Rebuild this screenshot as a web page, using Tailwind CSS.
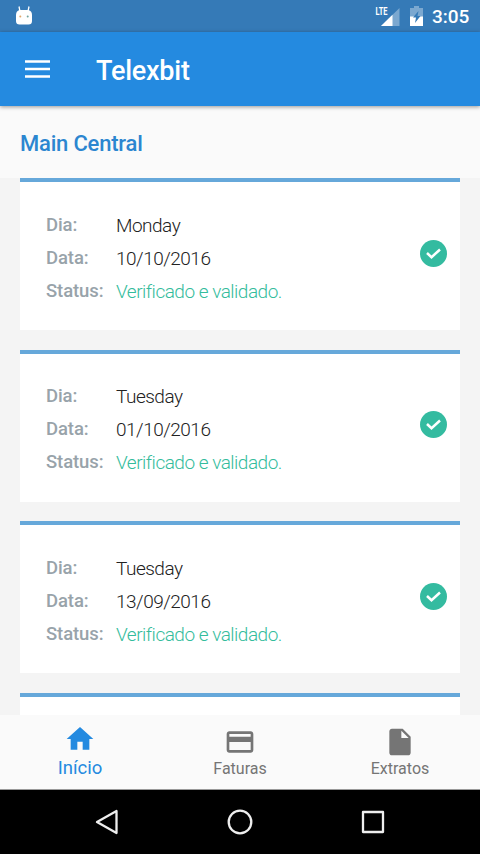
<!DOCTYPE html>
<html lang="pt">
<head>
<meta charset="utf-8">
<title>Telexbit</title>
<script src="https://cdn.jsdelivr.net/npm/@tailwindcss/browser@4"></script>
</head>
<body class="w-[480px] h-[854px] overflow-hidden flex flex-col bg-[#f4f4f4] font-['Roboto',sans-serif]">
<div class="h-8 shrink-0 bg-[#357ab7] flex items-center justify-between pl-4 pr-[10px] text-white">
  <svg class="w-4 h-[19px] -mt-0.5" viewBox="0 0 16 19"><path d="M3 0.5l1 5M13 0.5l-1 5" stroke="#fff" stroke-width="1.3"/><path d="M3.5 4h9Q16 5 16 9v6q0 3.5-3.5 3.5h-9Q0 18.500 0 15V9q0-4 3.500-5z" fill="#fff"/><circle cx="4.300" cy="10.500" r="1" fill="#e0a76c"/><circle cx="11.700" cy="10.500" r="1" fill="#6fa3a0"/></svg>
  <div class="flex items-center">
    <svg class="w-[26px] h-[22px]" viewBox="0 0 26 22"><path d="M24.500 3v18H6z" fill="#fff" opacity=".35"/><path d="M17.500 9.800V21H6z" fill="#fff"/><text x="0.500" y="9.500" font-family="Roboto" font-size="11.500" font-weight="700" fill="#fff" textLength="12" lengthAdjust="spacingAndGlyphs">LTE</text></svg>
    <svg class="w-[13px] h-[20px] ml-[9px]" viewBox="0 0 13 20"><path d="M4 0h5v2h4v18H0V2h4z" fill="#fff" opacity=".35"/><path d="M0 10.500h13V20H0z" fill="#fff"/><path d="M8.500 5L3 11.500h3L5 17l5.500-7H7.500z" fill="#357ab7"/></svg>
    <span class="ml-[9px] mt-px text-[19px] leading-8 font-medium w-[38px]">3:05</span>
  </div>
</div>
<header class="relative z-10 h-[74px] shrink-0 bg-[#248ae0] flex items-center pl-[25px] shadow-[0_1px_4px_rgba(0,0,0,0.4)]">
  <svg class="w-[25px] h-[18px]" viewBox="0 0 25 18"><path d="M0 1.500h25M0 9h25M0 16.500h25" stroke="#fff" stroke-width="2.700"/></svg>
  <span class="ml-[46px] mt-[3px] text-[27px] leading-8 font-medium tracking-[-0.25px] text-white">Telexbit</span>
</header>
<h1 class="h-[72px] shrink-0 bg-[#fafafa] pl-5 pt-[22px] text-[22px] leading-8 font-medium tracking-[-0.2px] text-[#2b86d0]">Main Central</h1>
<main class="h-[537px] shrink-0 overflow-hidden px-5 flex flex-col gap-[19.700px]" id="cards"></main>
<nav class="h-[75px] shrink-0 bg-[#fafafa] grid grid-cols-3 text-[#757575] text-[16px] border-b border-[#999]">
  <div class="flex flex-col items-center pt-2 text-[#248ae0]">
    <svg class="w-8 h-8" viewBox="0 0 24 24" fill="currentColor"><path d="M10 20v-6h4v6h5v-8h3L12 3 2 12h3v8z"/></svg>
    <span class="text-[18.500px] leading-[26px]">Início</span>
  </div>
  <div class="flex flex-col items-center pt-[11px]">
    <svg class="w-8 h-8" viewBox="0 0 24 24" fill="currentColor"><path d="M20 4H4c-1.110 0-1.990.890-1.990 2L2 18c0 1.110.890 2 2 2h16c1.110 0 2-.890 2-2V6c0-1.110-.890-2-2-2zm0 14H4v-6h16v6zm0-10H4V6h16v2z"/></svg>
    <span class="leading-[22px]">Faturas</span>
  </div>
  <div class="flex flex-col items-center pt-[11px]">
    <svg class="w-8 h-8" viewBox="0 0 24 24" fill="currentColor"><path d="M6 2c-1.100 0-1.990.900-1.990 2L4 20c0 1.100.890 2 1.990 2H18c1.100 0 2-.900 2-2V8l-6-6H6zm7 7V3.500L18.500 9H13z"/></svg>
    <span class="leading-[22px]">Extratos</span>
  </div>
</nav>
<footer class="h-16 shrink-0 bg-black flex items-center justify-center gap-[107px]">
  <svg class="w-[26px] h-[26px]" viewBox="0 0 26 26" fill="none" stroke="#eee" stroke-width="2.300" stroke-linejoin="round"><path d="M22.500 2v22L3 13z"/></svg>
  <svg class="w-[26px] h-[26px]" viewBox="0 0 26 26" fill="none" stroke="#eee" stroke-width="2.300"><circle cx="13" cy="13" r="11.300"/></svg>
  <svg class="w-[26px] h-[26px]" viewBox="0 0 26 26" fill="none" stroke="#eee" stroke-width="2.300" stroke-linejoin="round"><path d="M3 3h20v20H3z"/></svg>
</footer>
<script>
const rows = [['Monday','10/10/2016'],['Tuesday','01/10/2016'],['Tuesday','13/09/2016']];
document.getElementById('cards').innerHTML = rows.map(([day, date]) => `
<section class="h-[152px] shrink-0 bg-white border-t-4 border-[#66a8da] flex items-center justify-between pl-[26px] pr-[13px]">
  <dl class="mt-1 grid grid-cols-[70px_auto] auto-rows-[33px] leading-[33px] text-[19px] font-light tracking-[-0.5px] text-[#222]">
    <dt class="font-medium text-[18.500px] tracking-[-0.1px] text-[#98a3aa]">Dia:</dt><dd>${day}</dd>
    <dt class="font-medium text-[18.500px] tracking-[-0.1px] text-[#98a3aa]">Data:</dt><dd>${date}</dd>
    <dt class="font-medium text-[18.500px] tracking-[-0.1px] text-[#98a3aa]">Status:</dt><dd class="text-[#34bc9c]">Verificado e validado.</dd>
  </dl>
  <svg class="w-[27px] h-[27px] -mt-1.5" viewBox="0 0 27 27"><circle cx="13.500" cy="13.500" r="13.500" fill="#34bba0"/><path d="M7 13l4.500 4.200 8.500-7.700" fill="none" stroke="#fff" stroke-width="2.500"/></svg>
</section>`).join('') + '<section class="h-[152px] shrink-0 bg-white border-t-4 border-[#66a8da]"></section>';
</script>
</body>
</html>
